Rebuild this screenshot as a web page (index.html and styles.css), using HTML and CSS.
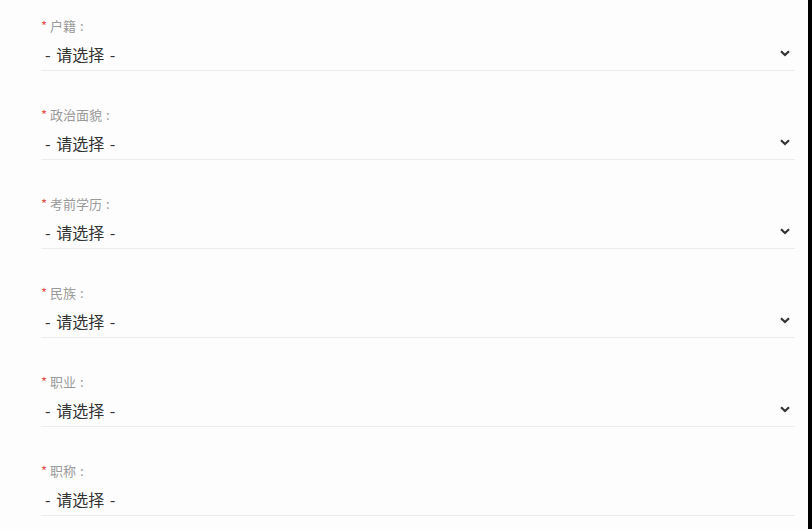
FILE: index.html
```html
<!DOCTYPE html>
<html lang="zh-CN">
  <head>
    <meta charset="utf-8" />
    <title>信息登记</title>
    <link rel="stylesheet" href="styles.css">
  </head>
  <body>
    <div class="page">
      <form class="form">
        <div class="field">
          <div class="label"><span class="req">*</span> 户籍<span class="colon">:</span></div>
          <div class="select">
            <span class="value">- 请选择 -</span>
            <svg class="arrow" viewBox="0 0 10 7" width="10" height="7"><path d="M1 1.2 L5 5 L9 1.2" /></svg>
          </div>
        </div>
        <div class="field">
          <div class="label"><span class="req">*</span> 政治面貌<span class="colon">:</span></div>
          <div class="select">
            <span class="value">- 请选择 -</span>
            <svg class="arrow" viewBox="0 0 10 7" width="10" height="7"><path d="M1 1.2 L5 5 L9 1.2" /></svg>
          </div>
        </div>
        <div class="field">
          <div class="label"><span class="req">*</span> 考前学历<span class="colon">:</span></div>
          <div class="select">
            <span class="value">- 请选择 -</span>
            <svg class="arrow" viewBox="0 0 10 7" width="10" height="7"><path d="M1 1.2 L5 5 L9 1.2" /></svg>
          </div>
        </div>
        <div class="field">
          <div class="label"><span class="req">*</span> 民族<span class="colon">:</span></div>
          <div class="select">
            <span class="value">- 请选择 -</span>
            <svg class="arrow" viewBox="0 0 10 7" width="10" height="7"><path d="M1 1.2 L5 5 L9 1.2" /></svg>
          </div>
        </div>
        <div class="field">
          <div class="label"><span class="req">*</span> 职业<span class="colon">:</span></div>
          <div class="select">
            <span class="value">- 请选择 -</span>
            <svg class="arrow" viewBox="0 0 10 7" width="10" height="7"><path d="M1 1.2 L5 5 L9 1.2" /></svg>
          </div>
        </div>
        <div class="field">
          <div class="label"><span class="req">*</span> 职称<span class="colon">:</span></div>
          <div class="select">
            <span class="value">- 请选择 -</span>
          </div>
        </div>
      </form>
      <div class="edge"></div>
    </div>
  </body>
</html>
```

FILE: styles.css
```css
html,
body {
  margin: 0;
  height: 100%;
}

body {
  background-color: #fdfdfd;
  font-family: "Noto Sans CJK SC", "Noto Sans", sans-serif;
  overflow: hidden;
}

.page {
  display: flex;
  height: 100%;
}

.form {
  flex: 1;
  padding-left: 41px;
  padding-right: 13px;
}

.edge {
  width: 4px;
  background-color: #000;
}

.field {
  padding-top: 17px;
  padding-bottom: 18px;
}

.label {
  height: 18px;
  line-height: 18px;
  font-size: 13px;
  color: #9a9a9a;
}

.colon {
  margin-left: 4px;
}

.req {
  color: #e0524c;
}

.select {
  display: flex;
  align-items: center;
  justify-content: space-between;
  margin-top: 2px;
  height: 34px;
  padding: 0 5px 0 4px;
  box-sizing: border-box;
  border-bottom: 1px solid #ececec;
}

.value {
  font-size: 16px;
  line-height: 22px;
  word-spacing: 2px;
  color: #333;
}

.arrow {
  margin-top: -1px;
}

.arrow path {
  fill: none;
  stroke: #333;
  stroke-width: 2.2;
}
```
